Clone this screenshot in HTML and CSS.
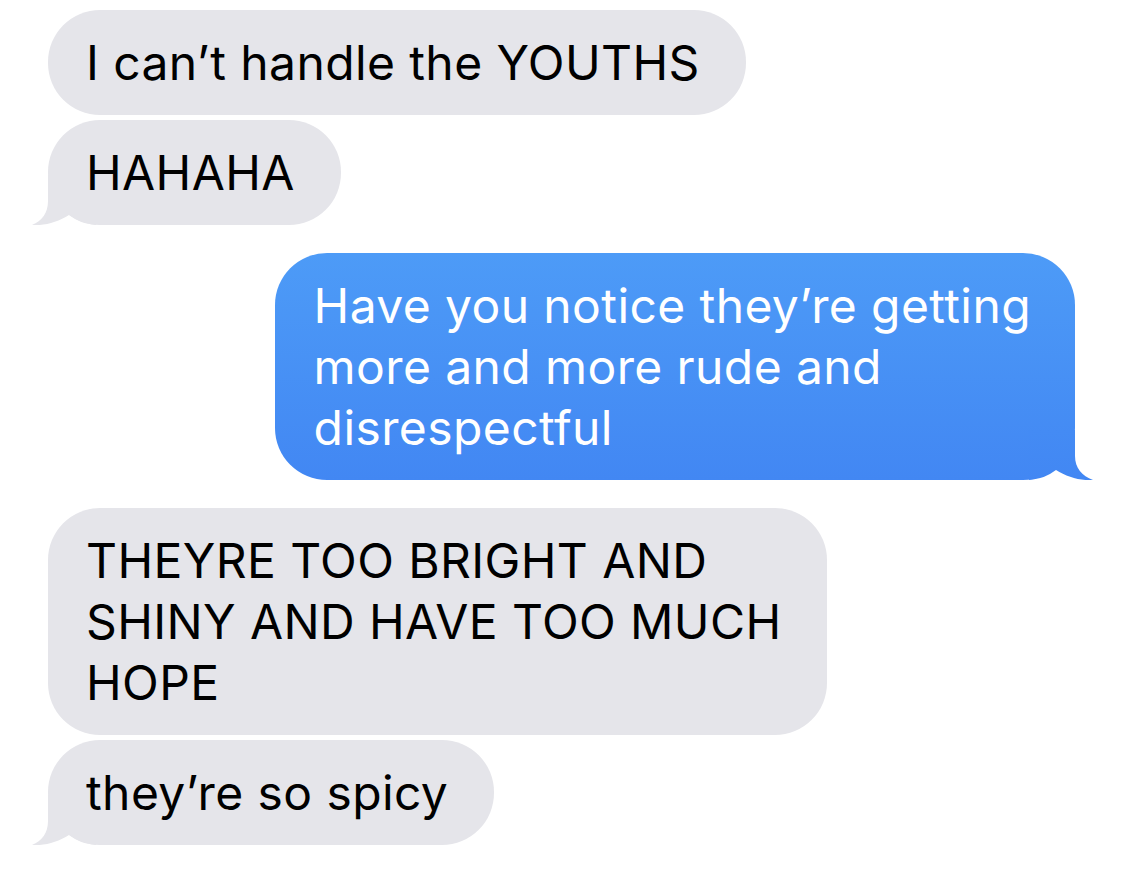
FILE: index.html
```html
<!DOCTYPE html>
<html lang="en">
<head>
    <meta charset="UTF-8">
    <meta name="viewport" content="width=device-width, initial-scale=1.0">
    <title>Messages</title>
    <link rel="stylesheet" href="styles.css">
</head>
<body>
<main class="thread">
    <div class="group">
        <div class="bubble them">I can’t handle the YOUTHS</div>
        <div class="bubble them tail">HAHAHA
            <svg class="tail-left" width="64" height="50" viewBox="0 0 64 50"><path d="M16 0 V26 C16 38 10 46 0 50 C12 51 26 47 37 40 C45 46 53 49 64 50 V0 Z"/></svg>
        </div>
    </div>
    <div class="group">
        <div class="bubble me tail">Have you notice they’re getting<br>more and more rude and<br>disrespectful
            <svg class="tail-right" width="64" height="50" viewBox="0 0 64 50">
                <defs>
                    <linearGradient id="blueTail" x1="0" y1="0" x2="0" y2="1">
                        <stop offset="0" stop-color="#448bf4"/>
                        <stop offset="1" stop-color="#4287f3"/>
                    </linearGradient>
                </defs>
                <path fill="url(#blueTail)" d="M46 0 V26 C46 38 53 46 64 50 C52 51 38 47 27 40 C19 46 11 49 0 50 V0 Z"/>
            </svg>
        </div>
    </div>
    <div class="group">
        <div class="bubble them">THEYRE TOO BRIGHT AND<br>SHINY AND HAVE TOO MUCH<br>HOPE</div>
        <div class="bubble them tail">they’re so spicy
            <svg class="tail-left" width="64" height="50" viewBox="0 0 64 50"><path d="M16 0 V26 C16 38 10 46 0 50 C12 51 26 47 37 40 C45 46 53 49 64 50 V0 Z"/></svg>
        </div>
    </div>
</main>
</body>
</html>
```
FILE: styles.css
```css
body {
    margin: 0;
    background: #fff;
    font-family: Inter, "Noto Sans", Arial, sans-serif;
}
.thread {
    display: flex;
    flex-direction: column;
    gap: 28px;
    padding: 10px 50px 0 48px;
}
.group {
    display: flex;
    flex-direction: column;
    gap: 5px;
}
.bubble {
    position: relative;
    isolation: isolate;
    align-self: flex-start;
    padding: 22px 46px 22px 38px;
    font-size: 48px;
    letter-spacing: 0.4px;
    line-height: 61px;
    border-radius: 52px;
    background: #e5e5ea;
    color: #000;
    white-space: nowrap;
}
.bubble.me {
    align-self: flex-end;
    padding: 22px 44px 22px 39px;
    color: #fff;
    background: linear-gradient(#4d9bf7, #4287f3);
}
.tail svg {
    position: absolute;
    bottom: 0;
    z-index: -1;
}
.tail-left {
    left: -16px;
    fill: #e5e5ea;
}
.tail-right {
    right: -18px;
}
```
